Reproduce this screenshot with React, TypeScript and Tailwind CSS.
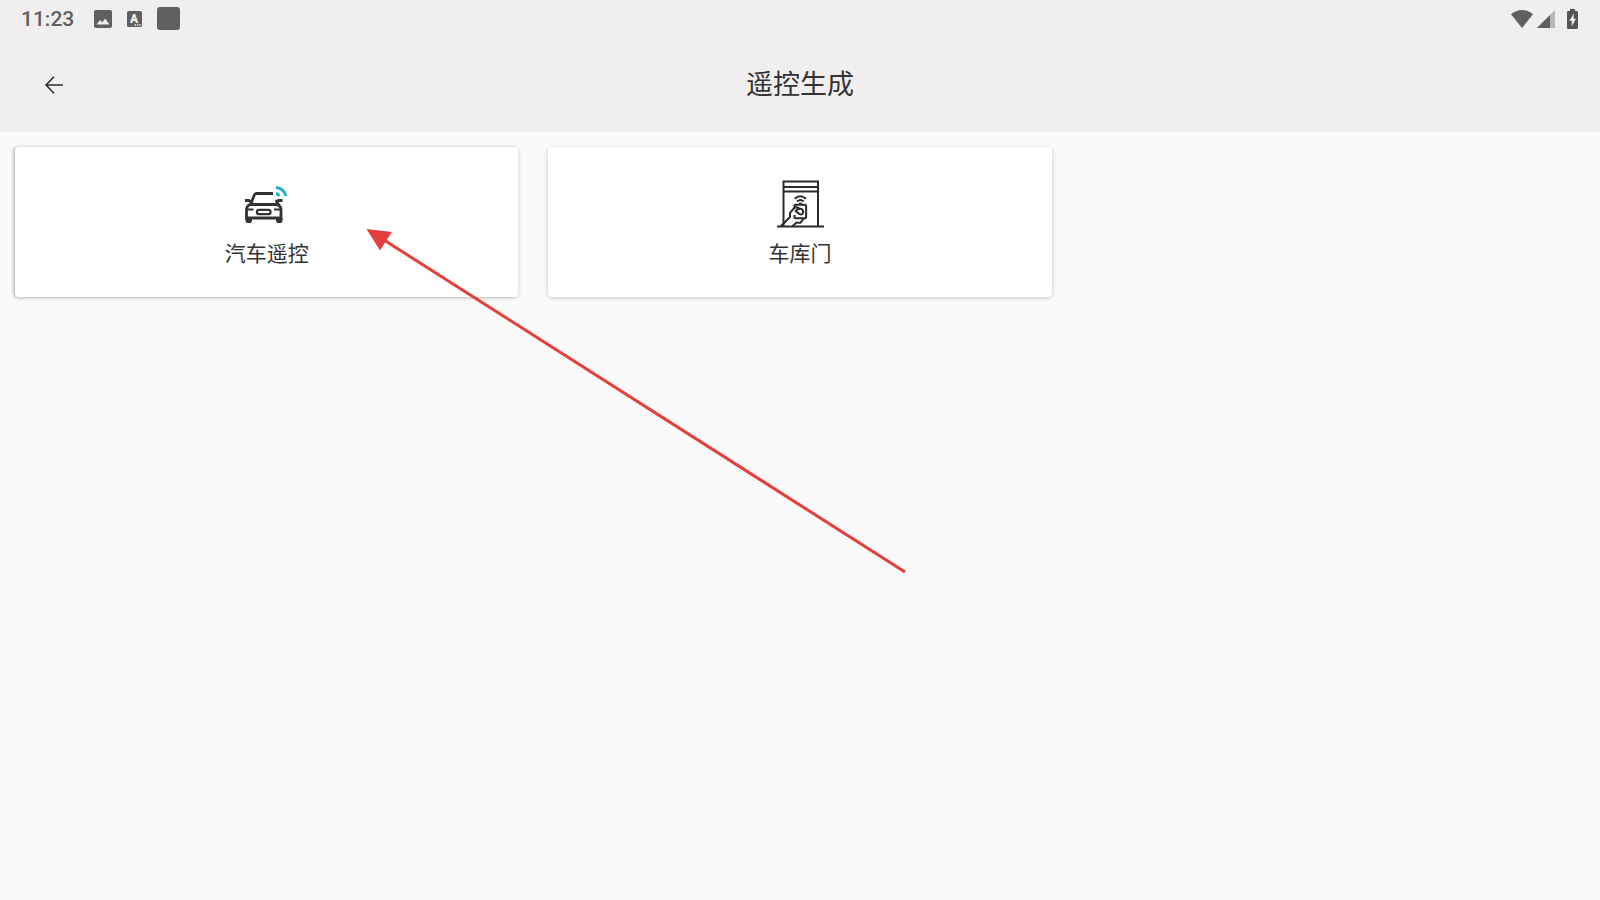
import React from 'react';

interface RemoteCardProps {
  label: string;
  icon: React.ReactNode;
  className?: string;
}

const ImageIcon = () => (
  <svg width="18" height="18" viewBox="0 0 18 18" aria-hidden="true">
    <rect width="18" height="18" rx="2" fill="#606060" />
    <path d="M2.5 14.5l3.5-4.5 2.2 2.2 3-3.6 4.300 5.900z" fill="#f0eeef" />
  </svg>
);

const KeyboardIcon = () => (
  <svg width="15" height="16" viewBox="0 0 15 16" aria-hidden="true">
    <rect width="15" height="16" rx="1.5" fill="#606060" />
    <text x="7" y="12" textAnchor="middle" fontSize="12" fontWeight="900" fill="#f0eeef">A</text>
    <path d="M7.600 14h1.400M10 14h1.400M12.400 14h1.400" stroke="#f0eeef" strokeWidth="1.3" />
  </svg>
);

const WifiIcon = () => (
  <svg width="22" height="18" viewBox="0 0 22 18" aria-hidden="true">
    <path d="M11 18L0 4.300C3 1.600 6.800 0 11 0s8 1.600 11 4.300z" fill="#606060" />
  </svg>
);

const SignalIcon = () => (
  <svg width="18" height="18" viewBox="0 0 18 18" aria-hidden="true">
    <path d="M0 18L18 0v18z" fill="#b9b8b8" />
    <path d="M0 18L13 5v13z" fill="#606060" />
  </svg>
);

const BatteryIcon = () => (
  <svg width="11" height="20" viewBox="0 0 11 20" aria-hidden="true">
    <path d="M3 0h5v2h1.700Q11 2 11 3.300v15.400Q11 20 9.700 20H1.300Q0 20 0 18.700V3.300Q0 2 1.300 2H3z" fill="#555" />
    <path d="M7 4.500L2.300 11.700h2.500v5.500l4.200-7.500H6.500z" fill="#f0eeef" />
  </svg>
);

const BackIcon = () => (
  <svg width="18" height="18" viewBox="0 0 18 18" fill="none" stroke="#2d2d2d" strokeWidth="1.6" aria-hidden="true">
    <path d="M18 9H1M9 .8L1 9l8 8.200" />
  </svg>
);

const CarIcon = () => (
  <svg width="48" height="48" viewBox="0 0 48 48" fill="none" stroke="#333" strokeWidth="2.8" aria-hidden="true">
    <path d="M30 13.500H13.500Q12 13.500 11.300 15L8 23.500" />
    <path d="M2 20.500h4l2 1.500M39.500 20.500h-4l-2 1.500" />
    <path d="M7 24.500h27.500Q38 26 38 30v8H3.500v-8Q3.500 26 7 24.500z" />
    <path d="M33 20l3 6" />
    <rect x="14" y="29.800" width="13.500" height="4.400" rx="2" strokeWidth="2.3" />
    <path d="M4 29.500h6.500M31 29.500h6" strokeWidth="2" />
    <path d="M2.500 38H9v3.500L7.500 43H4l-1.500-1.500zM33 38h6.500v3.500L38 43h-3.500L33 41.500z" fill="#333" stroke="none" />
    <g stroke="#18b3cb">
      <path d="M33 7.500Q41 8.500 42.800 16" />
      <path d="M33 13.300Q35.500 13.800 36.300 16.300" />
    </g>
  </svg>
);

const GarageIcon = () => (
  <svg width="48" height="48" viewBox="0 0 48 48" fill="none" stroke="#2b2b2b" strokeWidth="2" aria-hidden="true">
    <path d="M7.500 46.500V1.500h34.500v45" />
    <path d="M8 7h34M8 11.500h34M1 46.500h47" />
    <path d="M18.700 18.800Q24.300 13.800 29.900 18.800M21 21.500Q24.300 18.500 27.600 21.500" />
    <path d="M23 23.300h2.700" strokeWidth="1.4" />
    <path d="M18.500 29v-3.200q0-1 1-1h9.600q1 0 1 1v11.400q0 1-1 1h-9.600q-1 0-1-1V35" />
    <path d="M4.500 46.500L14 37v-4.200l4-4.500q2.500-1.800 4.500-.2l-2.800 3 3.800 3q2.600 1 3.400-1.200.8-2.200-1-3.700-2-1.200-3.800.6" />
    <path d="M16.500 46.200l3.800-3.500h4.200l3.300-4.200" />
  </svg>
);

const RemoteCard: React.FC<RemoteCardProps> = ({ label, icon, className = '' }) => (
  <button
    className={`flex flex-col items-center rounded-sm bg-white pt-[33px] pb-7 ${className}`}
  >
    {icon}
    <span className="mt-[11px] text-[21px] leading-[30px]">{label}</span>
  </button>
);

export default function App() {
  return (
    <div className="relative min-h-screen bg-[#fafafa] font-['Roboto','Noto_Sans_CJK_SC',sans-serif] text-[#333333]">
      <header className="bg-[#f0eeef]">
        {/* Status bar */}
        <div className="flex h-[37px] items-center justify-between pr-[22px] pl-[21px] text-[#606060]">
          <div className="flex items-center">
            <span className="text-[21px] leading-9 font-medium">11:23</span>
            <div className="ml-5 flex items-center gap-[15px]">
              <ImageIcon />
              <KeyboardIcon />
              <span className="size-[23px] rounded-[3px] bg-[#606060]" />
            </div>
          </div>
          <div className="flex items-center">
            <WifiIcon />
            <span className="mr-3 ml-1"><SignalIcon /></span>
            <BatteryIcon />
          </div>
        </div>

        {/* Title bar */}
        <div className="grid h-[95px] grid-cols-[1fr_auto_1fr] items-center px-[30px]">
          <button aria-label="返回" className="flex size-12 items-center justify-center">
            <BackIcon />
          </button>
          <h1 className="text-[27px] leading-10">遥控生成</h1>
        </div>
      </header>

      <main className="grid grid-cols-3 gap-[30px] p-[15px]">
        <RemoteCard
          label="汽车遥控"
          icon={<CarIcon />}
          className="shadow-[0_1px_4px_rgba(0,0,0,0.2),-2px_0_3px_rgba(0,0,0,0.16)]"
        />
        <RemoteCard
          label="车库门"
          icon={<GarageIcon />}
          className="shadow-[0_1px_4px_rgba(0,0,0,0.22)]"
        />
      </main>

      {/* Pointer to the car remote */}
      <svg
        className="pointer-events-none absolute top-[228px] left-[366px]"
        width="542"
        height="347"
        viewBox="0 0 542 347"
        aria-hidden="true"
      >
        <path d="M18 12L539 344" stroke="#e53e3c" strokeWidth="3" />
        <path d="M.5 1L26 4 14 22.500z" fill="#e53e3c" />
      </svg>
    </div>
  );
}
